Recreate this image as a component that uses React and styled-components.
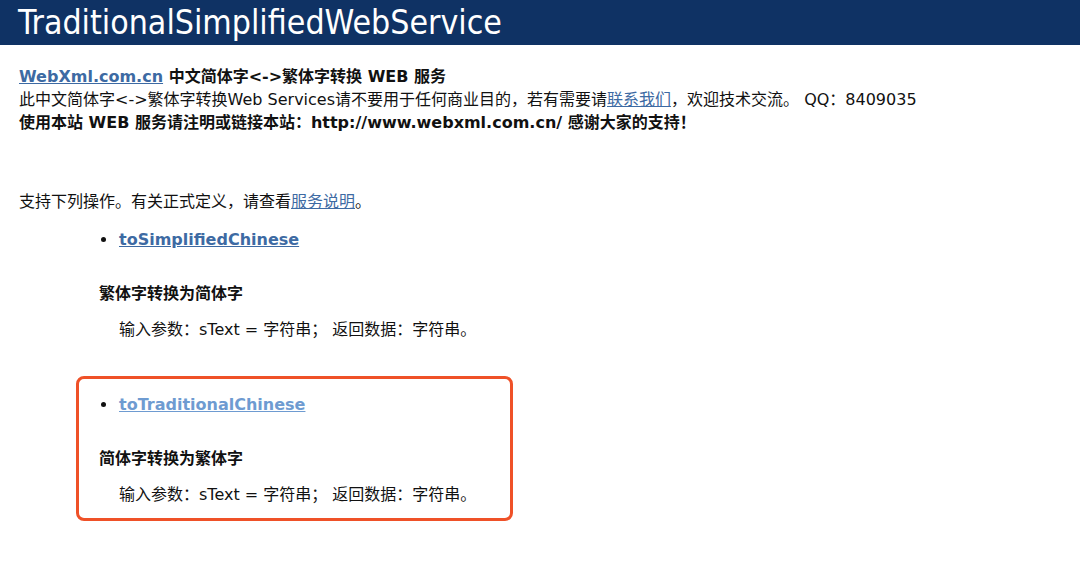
import React from "react";
import styled, { createGlobalStyle } from "styled-components";

const GlobalStyle = createGlobalStyle`
  html, body {
    margin: 0;
    padding: 0;
    background: #ffffff;
  }
  body {
    font-family: "DejaVu Sans", Verdana, "Noto Sans CJK SC", sans-serif;
    font-size: 16px;
    line-height: 23px;
    color: #111111;
  }
`;

const operations = [
  {
    name: "toSimplifiedChinese",
    title: "繁体字转换为简体字",
    visited: false,
    marked: false,
  },
  {
    name: "toTraditionalChinese",
    title: "简体字转换为繁体字",
    visited: true,
    marked: true,
  },
];

const App = () => {
  return (
    <Page>
      <GlobalStyle />
      <Heading>
        <Title>TraditionalSimplifiedWebService</Title>
      </Heading>

      <Intro>
        <Line $bold>
          <Link href="#">WebXml.com.cn</Link> 中文简体字&lt;-&gt;繁体字转换 WEB 服务
        </Line>
        <Line>
          此中文简体字&lt;-&gt;繁体字转换Web Services请不要用于任何商业目的，若有需要请
          <Link href="#" $plain>联系我们</Link>，欢迎技术交流。 QQ：8409035
        </Line>
        <Line $bold>
          使用本站 WEB 服务请注明或链接本站：http://www.webxml.com.cn/ 感谢大家的支持！
        </Line>
      </Intro>

      <Lead>
        支持下列操作。有关正式定义，请查看<Link href="#" $plain>服务说明</Link>。
      </Lead>

      <OperationList>
        {operations.map((op) => (
          <Operation key={op.name} $marked={op.marked}>
            <Bullet>
              <Link href="#" $visited={op.visited}>{op.name}</Link>
            </Bullet>
            <OpTitle>{op.title}</OpTitle>
            <OpParams>输入参数：sText = 字符串； 返回数据：字符串。</OpParams>
          </Operation>
        ))}
      </OperationList>
    </Page>
  );
};

export default App;

const Page = styled.div`
  width: 1080px;
  min-height: 562px;
`;

const Heading = styled.div`
  height: 45px;
  background: #0f3264;
  padding-left: 18px;
  box-sizing: border-box;
`;

const Title = styled.h1`
  margin: 0;
  font-family: "DejaVu Sans Condensed", "DejaVu Sans", sans-serif;
  font-weight: normal;
  font-size: 33.6px;
  line-height: 45px;
  color: #ffffff;
  white-space: nowrap;
`;

const Intro = styled.div`
  padding: 20px 0 0 19px;
`;

const Line = styled.div`
  font-weight: ${(p) => (p.$bold ? "bold" : "normal")};
  white-space: nowrap;
`;

const Link = styled.a`
  color: ${(p) => (p.$visited ? "#6e9bd1" : "#3d6aa3")};
  font-weight: ${(p) => (p.$plain ? "normal" : "bold")};
  text-decoration: underline;
`;

const Lead = styled.p`
  margin: 56px 0 0 19px;
`;

const OperationList = styled.div`
  display: flex;
  flex-direction: column;
  gap: 20px;
  margin: -2px 0 0 76px;
`;

const Operation = styled.div`
  width: 437px;
  box-sizing: border-box;
  border: 3px solid ${(p) => (p.$marked ? "#ef5128" : "transparent")};
  border-radius: 8px;
  padding: 14px 0 12px 20px;
`;

const Bullet = styled.div`
  position: relative;
  padding-left: 20px;

  &::before {
    content: "";
    position: absolute;
    left: 2px;
    top: 9px;
    width: 5px;
    height: 5px;
    border-radius: 50%;
    background: #111111;
  }
`;

const OpTitle = styled.div`
  margin-top: 31px;
  font-weight: bold;
`;

const OpParams = styled.div`
  margin-top: 13px;
  padding-left: 20px;
`;
